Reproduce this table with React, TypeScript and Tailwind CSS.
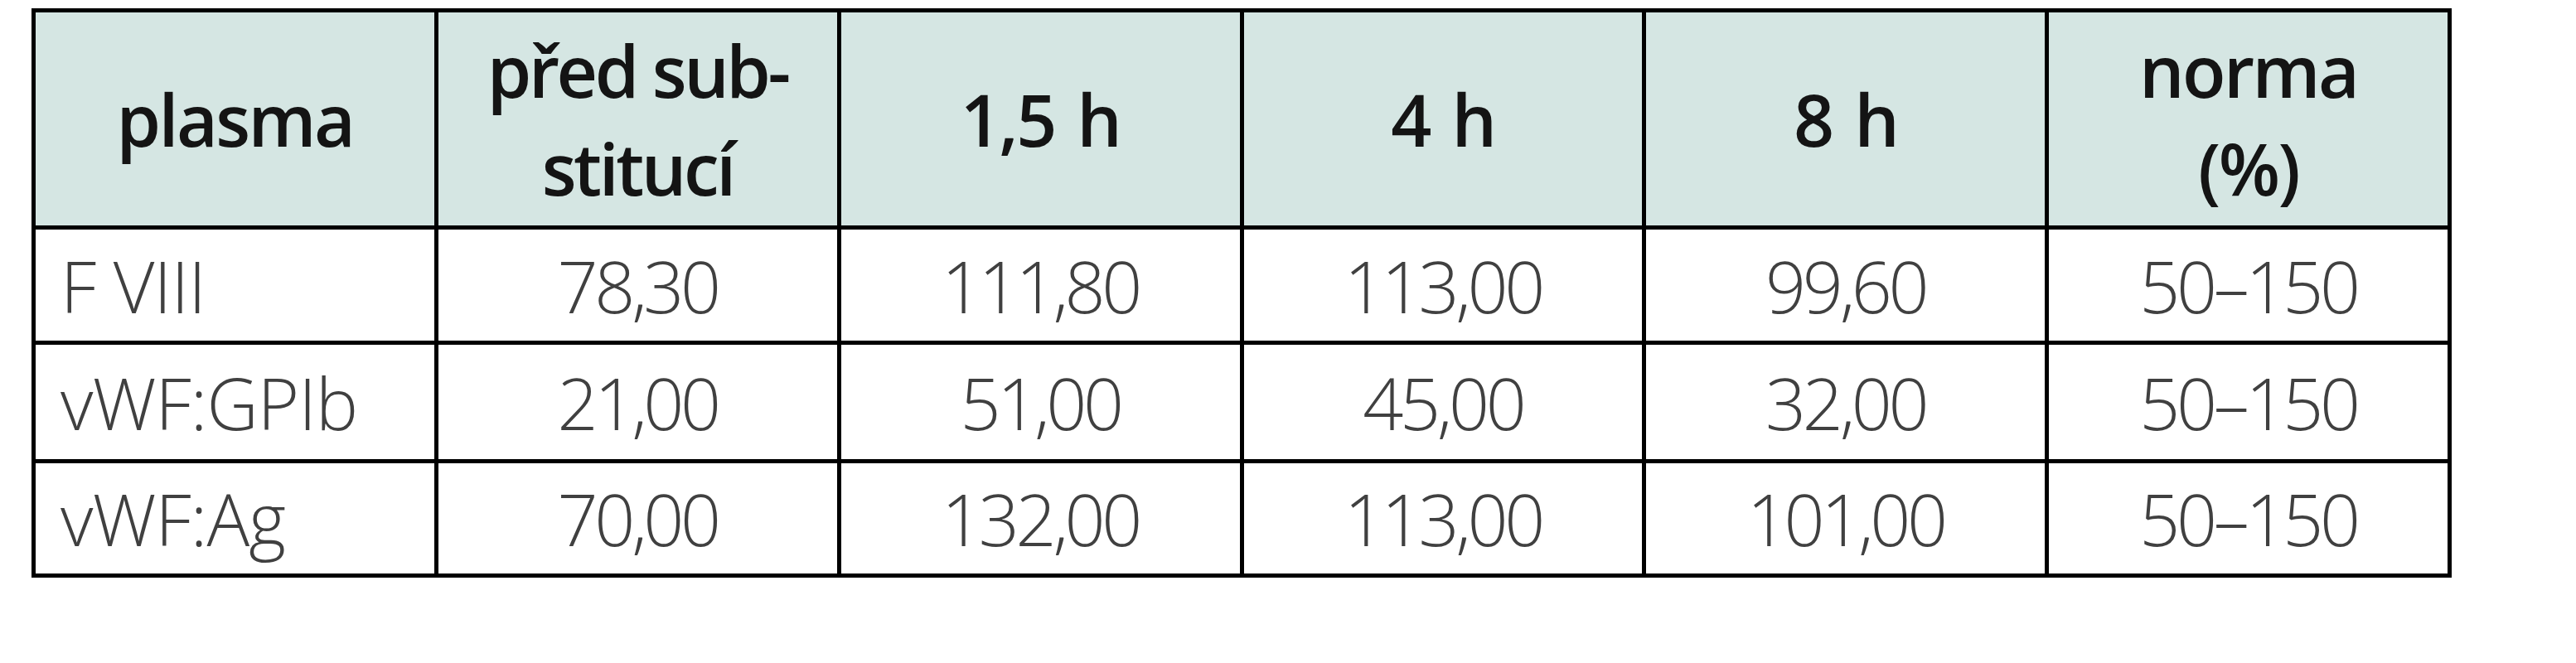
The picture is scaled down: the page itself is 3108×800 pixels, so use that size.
import React from 'react'

// Tabulka: hladiny faktorů po substituci
const rows = [
  ['F VIII', '78,30', '111,80', '113,00', '99,60', '50–150'],
  ['vWF:GPIb', '21,00', '51,00', '45,00', '32,00', '50–150'],
  ['vWF:Ag', '70,00', '132,00', '113,00', '101,00', '50–150'],
]

const font = { fontFamily: '"Open Sans", "Noto Sans", sans-serif' }

function HeadCell({ children, extra = '' }: { children: React.ReactNode; extra?: string }) {
  return (
    <div
      className={
        'bg-[#d5e6e3] flex items-center justify-center text-center text-[86px] leading-[118px] font-semibold text-[#141414] ' +
        extra
      }
    >
      <div>{children}</div>
    </div>
  )
}

export default function App() {
  return (
    <div className="bg-white w-[3108px] h-[800px] pt-[10px] pl-[38px]" style={font}>
      <div className="w-[2920px] bg-black p-[5px] grid grid-cols-6 gap-[5px] grid-rows-[257px_134px_138px_133px]">
        <HeadCell extra="tracking-[-0.03em]">plasma</HeadCell>
        <HeadCell extra="tracking-[-0.04em]">
          před sub-
          <br />
          stitucí
        </HeadCell>
        <HeadCell extra="tracking-[-0.03em] [word-spacing:0.08em]">1,5 h</HeadCell>
        <HeadCell extra="tracking-[-0.03em] [word-spacing:0.08em]">4 h</HeadCell>
        <HeadCell extra="tracking-[-0.03em] [word-spacing:0.08em]">8 h</HeadCell>
        <HeadCell extra="tracking-[-0.03em]">
          norma
          <br />
          (%)
        </HeadCell>

        {rows.map((r) =>
          r.map((v, i) => (
            <div
              key={r[0] + i}
              className={
                'bg-white flex items-center text-[86px] font-light text-[#404040] ' +
                (i === 0
                  ? 'justify-start pl-[30px] tracking-[-0.01em]'
                  : 'justify-center tracking-[-0.05em]')
              }
            >
              {v}
            </div>
          ))
        )}
      </div>
    </div>
  )
}
